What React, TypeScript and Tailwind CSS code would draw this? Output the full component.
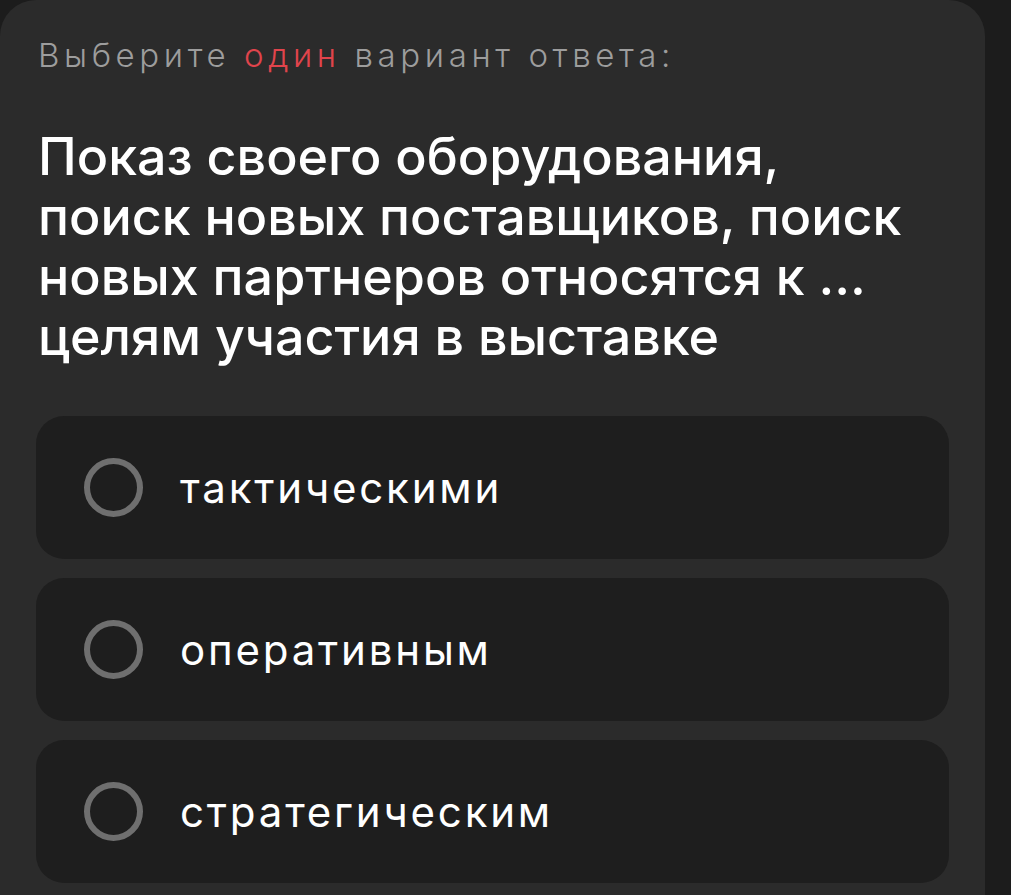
export default function App() {
  const options = ["тактическими", "оперативным", "стратегическим"];
  return (
    <div className="w-[1011px] h-[895px] bg-[#1c1c1c] overflow-hidden flex font-['Inter',sans-serif]">
      <div className="w-[985px] h-full bg-[#2b2b2b] rounded-t-[36px] px-[36px] pt-[35px]">
        <p className="text-[33px] leading-[40px] font-light tracking-[4.6px] text-[#9d9d9d] pl-[2px]">
          Выберите <span className="text-[#e0444c]">один</span> вариант ответа:
        </p>
        <h1 className="mt-[52px] text-[52px] leading-[60px] font-medium text-white pl-[2px]">
          Показ своего оборудования,
          <br />
          поиск новых поставщиков, поиск
          <br />
          новых партнеров относятся к …
          <br />
          целям участия в выставке
        </h1>
        <div className="mt-[49px] flex flex-col gap-[19px]">
          {options.map((o) => (
            <div key={o} className="h-[143px] bg-[#1e1e1e] rounded-[28px] flex items-center pl-[48px]">
              <div className="w-[59px] h-[59px] rounded-full border-[6px] border-[#6f6f6f] shrink-0" />
              <span className="ml-[37px] text-[42px] tracking-[2.8px] text-white font-normal">{o}</span>
            </div>
          ))}
        </div>
      </div>
    </div>
  );
}
